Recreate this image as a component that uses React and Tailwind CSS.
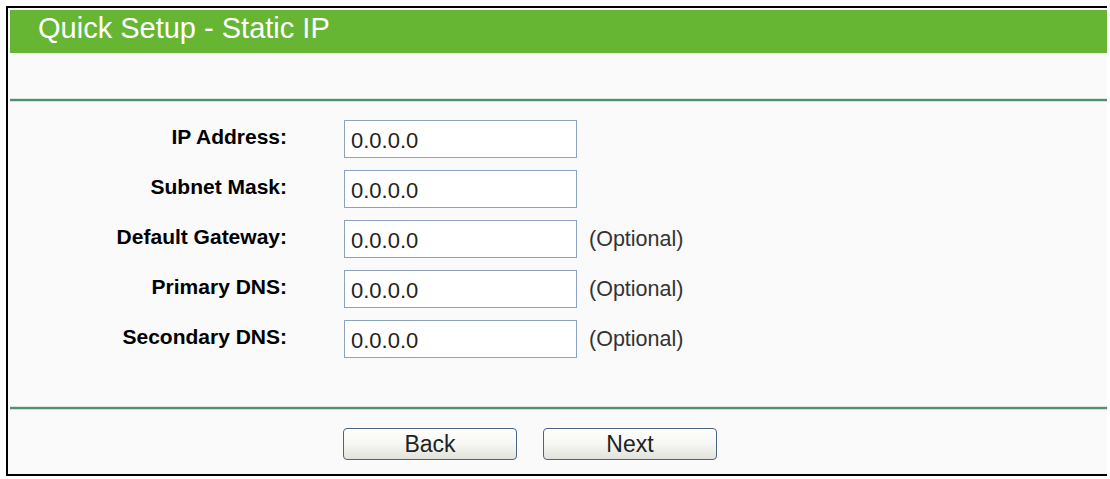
import React from 'react';

const fields = [
  { label: 'IP Address:', value: '0.0.0.0', optional: false },
  { label: 'Subnet Mask:', value: '0.0.0.0', optional: false },
  { label: 'Default Gateway:', value: '0.0.0.0', optional: true },
  { label: 'Primary DNS:', value: '0.0.0.0', optional: true },
  { label: 'Secondary DNS:', value: '0.0.0.0', optional: true },
];

function Separator() {
  return <div className="h-[2px] bg-[#528f70] shadow-[0_1px_0_#cfe3d8,0_-1px_0_#d8e8df]"></div>;
}

function WizardButton({ children }) {
  return (
    <button
      type="button"
      className="w-[174px] h-[32px] rounded-[4px] border border-[#4a6584] bg-gradient-to-b from-[#ffffff] via-[#f6f6f3] to-[#e2e2dc] text-[23px] text-[#222] leading-none"
    >
      {children}
    </button>
  );
}

export default function App() {
  return (
    <div className="w-[1110px] h-[479px] bg-white pt-[6px] pl-[6px] font-['Liberation_Sans',Arial,sans-serif]">
      <div className="w-[1101px] h-[470px] border-l-2 border-t-2 border-b-2 border-black bg-[#fafafa] pt-[2px] pl-[2px]">
        {/* Header */}
        <div className="h-[43px] bg-[#66b633] pl-[28px] text-[29px] leading-[37px] text-white">
          Quick Setup - Static IP
        </div>
        <div className="h-[46px]"></div>
        <Separator />

        {/* Form rows */}
        <div className="flex flex-col gap-[12px] pt-[19px]">
          {fields.map((f) => (
            <div key={f.label} className="grid grid-cols-[277px_233px_auto] gap-x-[57px] items-center h-[38px]">
              <div className="text-right font-bold text-[21px] text-black pb-[4px]">{f.label}</div>
              <div className="h-[38px] border border-[#8ba3bf] bg-white pl-[6px] pt-[2px] flex items-center text-[22px] text-[#222]">
                {f.value}
              </div>
              <div className="-ml-[45px] text-[21.5px] text-[#333] pt-[1px]">{f.optional ? '(Optional)' : ''}</div>
            </div>
          ))}
        </div>

        <div className="h-[49px]"></div>
        <Separator />

        {/* Buttons */}
        <div className="flex gap-[26px] pl-[333px] pt-[19px]">
          <WizardButton>Back</WizardButton>
          <WizardButton>Next</WizardButton>
        </div>
      </div>
    </div>
  );
}
